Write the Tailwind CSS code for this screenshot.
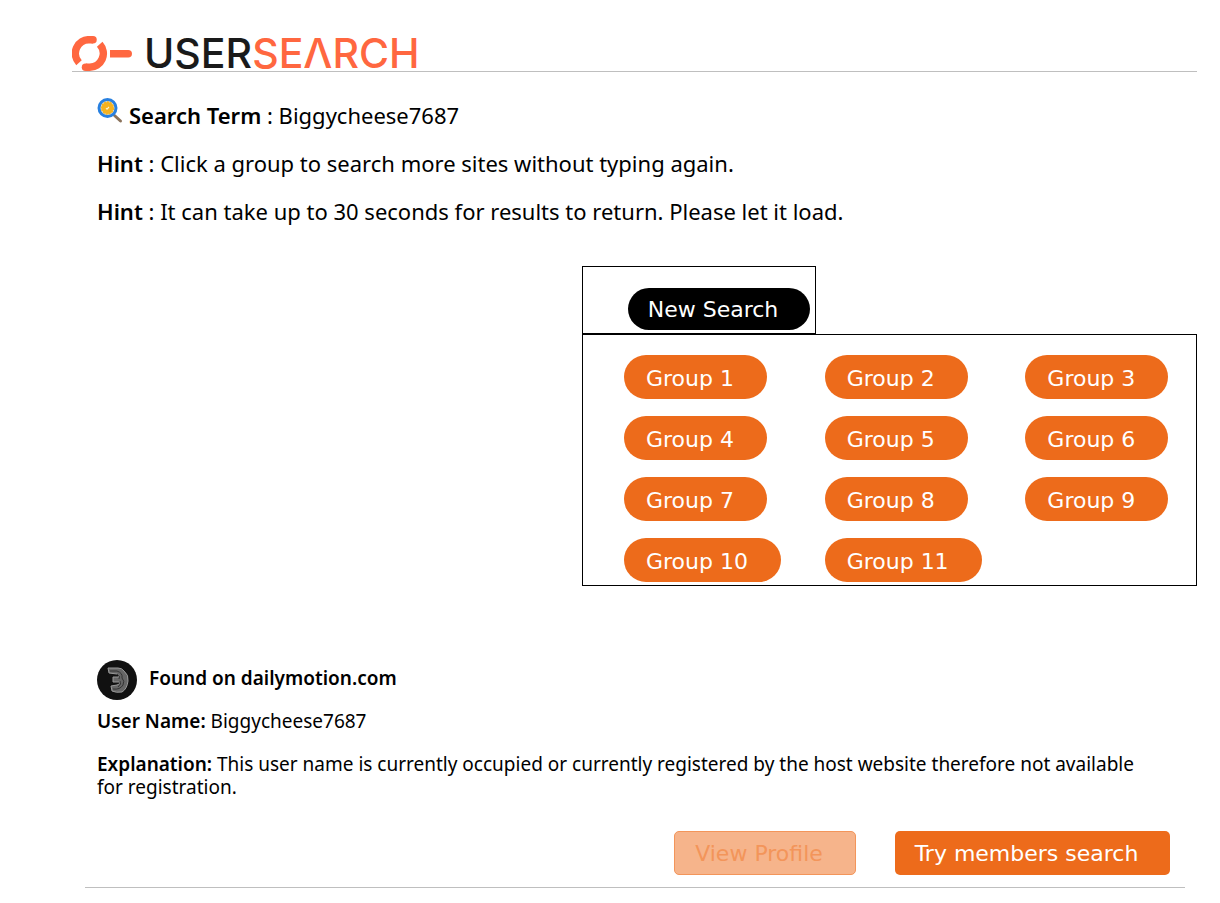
<!DOCTYPE html>
<html lang="en">
<head>
<meta charset="utf-8">
<meta name="viewport" content="width=device-width, initial-scale=1">
<title>UserSearch</title>
<script src="https://cdn.jsdelivr.net/npm/@tailwindcss/browser@4"></script>
</head>
<body class="bg-white text-black font-['Noto_Sans',sans-serif]">
<div class="pl-[72px] pr-[23px] pt-9">
  <header class="border-b border-[#bfbfbf]">
    <a href="#" class="flex h-[35px] w-fit items-center gap-3" aria-label="UserSearch">
      <svg class="h-[35px] w-[60px]" viewBox="0 0 60 35" fill="none" stroke="#ff6740" stroke-width="7.500" aria-hidden="true">
        <path d="M7 26.700A13.700 13.700 0 0 1 17.500 3.700H21"/>
        <circle cx="21" cy="3.750" r="3.750" fill="#ff6740" stroke="none"/>
        <path d="M27.700 8.300A13.700 13.700 0 0 1 17.500 31.250H14"/>
        <circle cx="13.500" cy="31.250" r="3.750" fill="#ff6740" stroke="none"/>
        <path d="M38 14h18.200a3.750 3.750 0 0 1 0 7.500H38z" fill="#ff6740" stroke="none"/>
      </svg>
      <span class="font-['Inter',sans-serif] text-[41px] font-medium leading-[35px] text-[#1a1a1a]">USER<span class="text-[#ff6740]">SEΛRCH</span></span>
    </a>
  </header>

  <main>
    <section class="space-y-4 px-[25px] pt-[27px] text-[22px] leading-8">
      <p class="flex items-center gap-[6px]">
        <svg class="-mt-2 size-[26px] shrink-0" viewBox="0 0 26 26" aria-hidden="true">
          <path d="M17.500 17.500l6 5.500" stroke="#8b735c" stroke-width="3" stroke-linecap="round"/>
          <circle cx="10.500" cy="10" r="8.500" fill="#cfe0ea" stroke="#2880e0" stroke-width="3"/>
          <circle cx="10.500" cy="10" r="6" fill="#f5b21f" stroke="#f5b21f" stroke-width="1.500" stroke-dasharray="2 1"/>
          <path d="M9 10.200l1 1 2-2.200" fill="none" stroke="#fff3c8" stroke-width="1.200"/>
        </svg>
        <span><b class="font-semibold">Search Term</b> : Biggycheese7687</span>
      </p>
      <p><b class="font-semibold">Hint</b> : Click a group to search more sites without typing again.</p>
      <p><b class="font-semibold">Hint</b> : It can take up to 30 seconds for results to return. Please let it load.</p>
    </section>

    <nav class="ml-auto mt-[39px] w-full max-w-[615px] font-['DejaVu_Sans',sans-serif] text-[22px] text-white" aria-label="Search groups">
      <div class="w-[234px] border border-black pb-[3px] pl-[45px] pt-[21px]">
        <button type="button" class="h-[42px] w-[182px] rounded-full bg-black pr-3">New Search</button>
      </div>
      <div class="grid grid-cols-3 gap-y-[17px] border border-black pb-[3px] pl-[11px] pt-5">
        <div class="pl-[30px]"><button type="button" class="block h-11 rounded-full bg-[#ed6b1b] pl-[22px] pr-[33px] pt-[2px]">Group 1</button></div>
        <div class="pl-[30px]"><button type="button" class="block h-11 rounded-full bg-[#ed6b1b] pl-[22px] pr-[33px] pt-[2px]">Group 2</button></div>
        <div class="pl-[30px]"><button type="button" class="block h-11 rounded-full bg-[#ed6b1b] pl-[22px] pr-[33px] pt-[2px]">Group 3</button></div>
        <div class="pl-[30px]"><button type="button" class="block h-11 rounded-full bg-[#ed6b1b] pl-[22px] pr-[33px] pt-[2px]">Group 4</button></div>
        <div class="pl-[30px]"><button type="button" class="block h-11 rounded-full bg-[#ed6b1b] pl-[22px] pr-[33px] pt-[2px]">Group 5</button></div>
        <div class="pl-[30px]"><button type="button" class="block h-11 rounded-full bg-[#ed6b1b] pl-[22px] pr-[33px] pt-[2px]">Group 6</button></div>
        <div class="pl-[30px]"><button type="button" class="block h-11 rounded-full bg-[#ed6b1b] pl-[22px] pr-[33px] pt-[2px]">Group 7</button></div>
        <div class="pl-[30px]"><button type="button" class="block h-11 rounded-full bg-[#ed6b1b] pl-[22px] pr-[33px] pt-[2px]">Group 8</button></div>
        <div class="pl-[30px]"><button type="button" class="block h-11 rounded-full bg-[#ed6b1b] pl-[22px] pr-[33px] pt-[2px]">Group 9</button></div>
        <div class="pl-[30px]"><button type="button" class="block h-11 rounded-full bg-[#ed6b1b] pl-[22px] pr-[33px] pt-[2px]">Group 10</button></div>
        <div class="pl-[30px]"><button type="button" class="block h-11 rounded-full bg-[#ed6b1b] pl-[22px] pr-[33px] pt-[2px]">Group 11</button></div>
      </div>
    </nav>

    <article class="ml-[13px] mr-3 mt-[74px] border-b border-[#bfbfbf] px-3 pb-3 text-[19px] leading-[23px]">
      <div class="flex items-center gap-3">
        <svg class="size-10 shrink-0" viewBox="0 0 40 40" fill="none" aria-hidden="true">
          <circle cx="20" cy="20" r="20" fill="#111"/>
          <path d="M11 8h10q4 0 6 3 5 4 4 10-1 8-6 11-6 1-10-1l-1-5 6-1q4-1 3-3h-7v-5h6q1-2-2-3l-8-1z" fill="#666" stroke="#999"/>
          <path d="M13 11h7q6 2 5 7 3 3 1 7-3 5-10 4M20 14q4 2 2 5M23 21q2 3-2 6" stroke="#333"/>
        </svg>
        <h2 class="pb-1 font-semibold">Found on dailymotion.com</h2>
      </div>
      <p class="mt-[10px]"><b class="font-semibold">User Name:</b> Biggycheese7687</p>
      <p class="mt-5 pr-3"><b class="font-semibold">Explanation:</b> This user name is currently occupied or currently registered by the host website therefore not available for registration.</p>
      <div class="mr-[3px] mt-8 flex justify-end gap-[39px] font-['DejaVu_Sans',sans-serif] text-[22px] text-white">
        <button type="button" disabled class="h-11 w-[182px] rounded-[5px] border border-[#f3955a] bg-[#f6b48b] pr-3 text-[#f3955a]">View Profile</button>
        <button type="button" class="h-11 w-[275px] rounded-[5px] bg-[#ed6b1b] pr-3">Try members search</button>
      </div>
    </article>
  </main>
</div>
</body>
</html>
